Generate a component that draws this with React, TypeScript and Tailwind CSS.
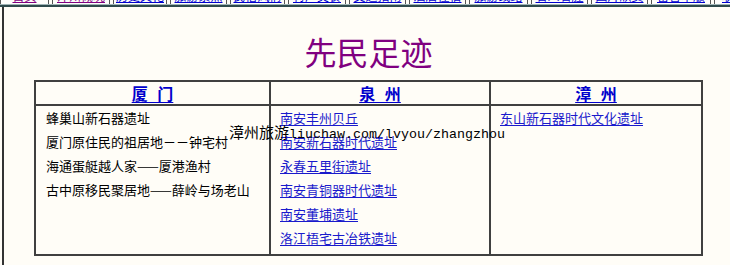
const NAV = [
  { label: '首页', w: 'w-[49px]', visited: true },
  { label: '漳州概况', w: 'w-[58px]', visited: true },
  { label: '历史文化', w: 'w-[54px]', visited: false },
  { label: '旅游景点', w: 'w-[57px]', visited: false },
  { label: '民俗风情', w: 'w-[55px]', visited: false },
  { label: '特产美食', w: 'w-[58px]', visited: false },
  { label: '交通指南', w: 'w-[57px]', visited: false },
  { label: '酒店住宿', w: 'w-[57px]', visited: false },
  { label: '旅游线路', w: 'w-[59px]', visited: false },
  { label: '名人名胜', w: 'w-[57px]', visited: false },
  { label: '图片欣赏', w: 'w-[57px]', visited: false },
  { label: '留言本版', w: 'w-[60px]', visited: false },
  { label: '联系', w: 'w-[40px]', visited: false },
]

const XIAMEN = [
  '蜂巢山新石器遗址',
  '厦门原住民的祖居地－－钟宅村',
  '海通蛋艇越人家——厦港渔村',
  '古中原移民聚居地——薛岭与场老山',
]

const QUANZHOU = [
  '南安丰州贝丘',
  '南安新石器时代遗址',
  '永春五里街遗址',
  '南安青铜器时代遗址',
  '南安董埔遗址',
  '洛江梧宅古冶铁遗址',
]

const ZHANGZHOU = ['东山新石器时代文化遗址']

const cjk = "font-['Noto_Sans_CJK_SC',sans-serif]"

function Header({ title, className }: { title: string; className: string }) {
  return (
    <div className={`flex items-center justify-center ${className}`}>
      <a className="text-[16px] font-bold text-[#0000cc] underline underline-offset-2 [word-spacing:6px]">
        {title}
      </a>
    </div>
  )
}

export default function App() {
  return (
    <div className={`relative w-[730px] h-[265px] overflow-hidden bg-[#fffdf7] ${cjk}`}>
      {/* cut-off nav strip */}
      <div className="flex gap-[3px] h-[4px] overflow-hidden">
        {NAV.map(n => (
          <div
            key={n.label}
            className={`${n.w} shrink-0 h-[4px] flex flex-col justify-end items-center overflow-hidden border-x border-[#555] bg-[#fffefc]`}
          >
            <a
              className={`mb-[2px] text-[12px] leading-[12px] underline underline-offset-[1px] whitespace-nowrap ${
                n.visited ? 'text-[#800080]' : 'text-[#0000cc]'
              }`}
            >
              {n.label}
            </a>
          </div>
        ))}
      </div>
      <div className="h-[1px] bg-[#9fb4b6]" />
      <div className="h-[2px] bg-[#2f4a4c]" />

      {/* main box */}
      <div className="ml-[2px] border-l-2 border-[#333] h-[258px]">
        <div className="ml-[30px] w-[669px] pt-[28px]">
          <h1 className="text-center text-[32px] leading-[32px] text-[#800080]">先民足迹</h1>

          <div className="mt-[13px] border-2 border-[#404040]">
            <div className="flex h-[24px] border-b-2 border-[#404040]">
              <Header title="厦 门" className="w-[235px] border-r-2 border-[#404040]" />
              <Header title="泉 州" className="w-[220px] border-r-2 border-[#404040]" />
              <Header title="漳 州" className="flex-1" />
            </div>
            <div className="flex text-[13px] leading-[24px]">
              <div className="w-[235px] pl-[10px] pb-[4px] border-r-2 border-[#404040] text-black">
                {XIAMEN.map(t => (
                  <div key={t}>{t}</div>
                ))}
              </div>
              <div className="w-[220px] pl-[9px] pb-[4px] border-r-2 border-[#404040]">
                {QUANZHOU.map(t => (
                  <div key={t}>
                    <a className="text-[#1a1acc] underline underline-offset-2">{t}</a>
                  </div>
                ))}
              </div>
              <div className="flex-1 pl-[9px]">
                {ZHANGZHOU.map(t => (
                  <div key={t}>
                    <a className="text-[#1a1acc] underline underline-offset-2">{t}</a>
                  </div>
                ))}
              </div>
            </div>
          </div>
        </div>
      </div>

      {/* watermark over the table */}
      <div className="absolute left-[229px] top-[124px] flex items-baseline text-black whitespace-nowrap">
        <span className="text-[15px] leading-[15px]">漳州旅游</span>
        <span className="font-['Liberation_Mono',monospace] text-[13.33px] leading-[15px]">
          liuchaw.com/lvyou/zhangzhou
        </span>
      </div>
    </div>
  )
}
